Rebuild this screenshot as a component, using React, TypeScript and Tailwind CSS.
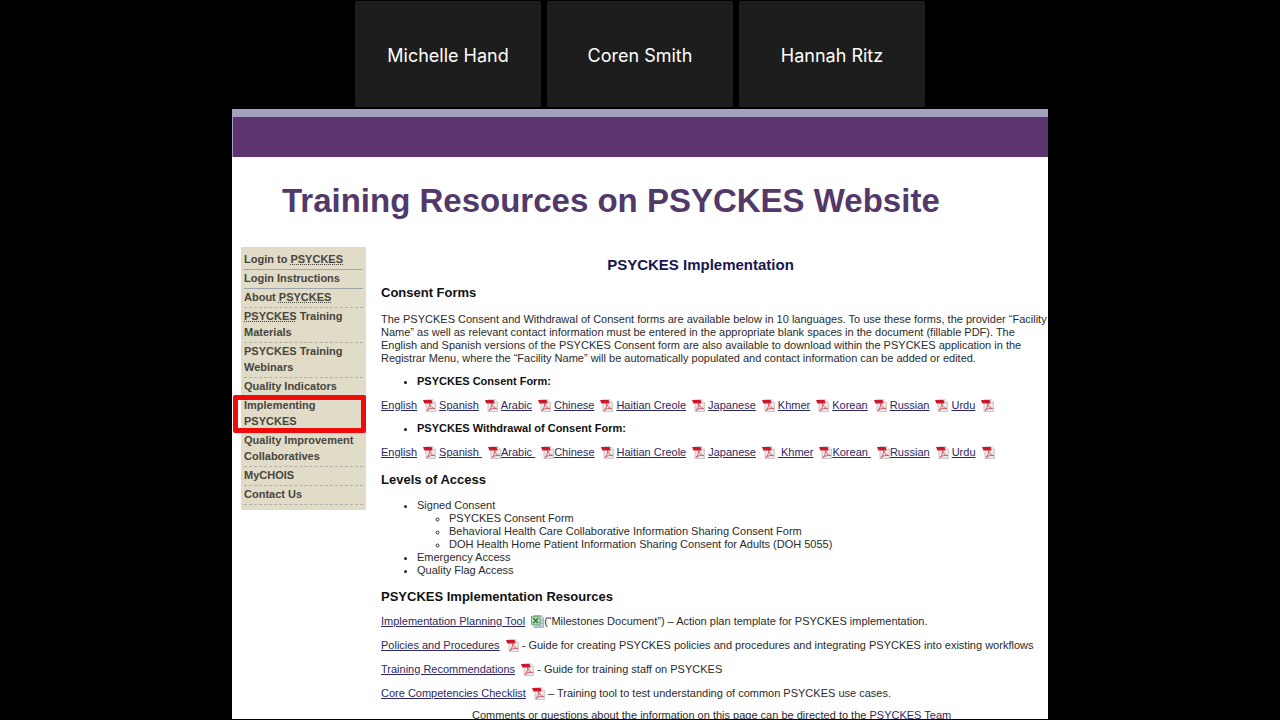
import type { ReactNode } from "react";

const participants = ["Michelle Hand", "Coren Smith", "Hannah Ritz"];

// non-breaking spaces keep the underline running past the word
const consentForms = ["English", "Spanish", "Arabic", "Chinese", "Haitian Creole", "Japanese", "Khmer", "Korean", "Russian", "Urdu"];
const withdrawalForms = [
  "English",
  "Spanish\u00a0",
  "Arabic\u00a0",
  "Chinese",
  "Haitian Creole",
  "Japanese",
  "\u00a0Khmer",
  "Korean\u00a0",
  "Russian",
  "Urdu",
];

// languages that sit directly against the icon before them
const tightForms = ["Arabic\u00a0", "Chinese", "Korean\u00a0", "Russian"];

function PdfIcon() {
  return (
    <svg viewBox="0 0 13 13" className="h-[13px] w-[13px] shrink-0" aria-hidden="true">
      <path d="M3 .8h7l2.4 2.4v9.3H3z" fill="#eeeaea" stroke="#b9b3b3" strokeWidth=".7" />
      <path d="M9.8.8v2.6h2.6" fill="#fff" stroke="#b9b3b3" strokeWidth=".6" />
      <path d="M0 1h8.6l1 3.6H1.4z" fill="#c9182b" />
      <path
        d="M6.6 4.4c.7 2.8 2.3 4.7 5 5.2-2.6-.6-5.4 0-7.6 1.9 1.7-1.8 2.8-4.2 2.6-7.1z"
        fill="none"
        stroke="#d4485a"
        strokeWidth=".9"
        strokeLinejoin="round"
      />
    </svg>
  );
}

function ExcelIcon() {
  return (
    <svg viewBox="0 0 13 13" className="h-[13px] w-[13px] shrink-0" aria-hidden="true">
      <path d="M3 .6h7.4l2.1 2.1v9.7H3z" fill="#cfdbea" stroke="#8794ad" strokeWidth=".7" />
      <path d="M9 4.5h2.6M9 6.5h2.6M9 8.5h2.6M5 11h6.6" stroke="#8ea4c4" strokeWidth=".8" />
      <path d="M.5 1.4h8.6v8.4H.5z" fill="#b9dcb3" stroke="#5f9a62" strokeWidth=".8" />
      <path d="M2.2 3l5 5.2M7.2 3l-5 5.2" stroke="#2f8240" strokeWidth="1.5" />
    </svg>
  );
}

function DocLink({ children }: { children: ReactNode }) {
  return (
    <a href="#" className="text-[#2d2863] underline">
      {children}
    </a>
  );
}

function Abbr() {
  return <abbr className="underline decoration-dotted underline-offset-1">PSYCKES</abbr>;
}

const menu: { label: ReactNode; solid?: boolean; active?: boolean }[] = [
  { label: <>Login to <Abbr /></>, solid: true },
  { label: "Login Instructions", solid: true },
  { label: <>About <Abbr /></> },
  { label: <><Abbr /> Training Materials</> },
  { label: "PSYCKES Training Webinars" },
  { label: "Quality Indicators" },
  { label: "Implementing PSYCKES", active: true },
  { label: "Quality Improvement Collaboratives" },
  { label: "MyCHOIS" },
  { label: "Contact Us" },
];

function Sidebar() {
  return (
    <nav className="w-[125px] shrink-0 self-start bg-[#e1dcc8] px-[3px] pt-1 pb-[5px]">
      <ul>
        {menu.map((item, i) => (
          <li
            key={i}
            className={`relative border-b pb-0.5 text-[11px] leading-4 font-bold text-[#48453c] ${
              item.solid ? "border-solid border-[#9aa5ac]" : "border-dashed border-[#b3b0a6]"
            }`}
          >
            <a href="#" className={item.active ? "block w-20" : "block"}>
              {item.label}
            </a>
            {item.active && <span className="absolute -inset-y-0.5 -left-[11px] -right-[3px] rounded-xs border-5 border-[#f00a0a]" />}
          </li>
        ))}
      </ul>
    </nav>
  );
}

function FormRow({ forms }: { forms: string[] }) {
  return (
    <div className="flex h-6 items-center">
      {forms.map((form) => (
        <span key={form} className={`flex items-center gap-1.5 ${tightForms.includes(form) && forms === withdrawalForms ? "" : "pl-[3px] first:pl-0"}`}>
          <DocLink>{form}</DocLink>
          <PdfIcon />
        </span>
      ))}
    </div>
  );
}

const resources = [
  { name: "Implementation Planning Tool", icon: <ExcelIcon />, text: "(“Milestones Document”) – Action plan template for PSYCKES implementation." },
  { name: "Policies and Procedures", icon: <PdfIcon />, text: "\u00a0- Guide for creating PSYCKES policies and procedures and integrating PSYCKES into existing workflows" },
  { name: "Training Recommendations", icon: <PdfIcon />, text: "\u00a0- Guide for training staff on PSYCKES" },
  { name: "Core Competencies Checklist", icon: <PdfIcon />, text: "\u00a0– Training tool to test understanding of common PSYCKES use cases." },
];

function Heading({ children }: { children: ReactNode }) {
  return <h3 className="text-[13px] leading-4 font-bold text-[#111]">{children}</h3>;
}

function Content() {
  return (
    <div className="min-w-0 flex-1 pt-2.5 text-[11px] leading-[13px] whitespace-nowrap text-[#2b2b2b]">
      <h2 className="pr-7 text-center text-[15px] leading-4 font-bold text-[#171650]">PSYCKES Implementation</h2>

      <div className="mt-3">
        <Heading>Consent Forms</Heading>
      </div>
      <p className="mt-3">
        The PSYCKES Consent and Withdrawal of Consent forms are available below in 10 languages. To use these forms, the provider “Facility
        <br />
        Name” as well as relevant contact information must be entered in the appropriate blank spaces in the document (fillable PDF). The
        <br />
        English and Spanish versions of the PSYCKES Consent form are also available to download within the PSYCKES application in the
        <br />
        Registrar Menu, where the “Facility Name” will be automatically populated and contact information can be added or edited.
      </p>

      <ul className="mt-1 list-disc pl-9 leading-6 font-bold text-[#111]">
        <li>PSYCKES Consent Form:</li>
      </ul>
      <FormRow forms={consentForms} />
      <ul className="list-disc pl-9 leading-[23px] font-bold text-[#111]">
        <li>PSYCKES Withdrawal of Consent Form:</li>
      </ul>
      <FormRow forms={withdrawalForms} />

      <div className="mt-2">
        <Heading>Levels of Access</Heading>
      </div>
      <ul className="mt-[11px] list-disc pl-9">
        <li>
          Signed Consent
          <ul className="list-[circle] pl-8">
            <li>PSYCKES Consent Form</li>
            <li>Behavioral Health Care Collaborative Information Sharing Consent Form</li>
            <li>DOH Health Home Patient Information Sharing Consent for Adults (DOH 5055)</li>
          </ul>
        </li>
        <li>Emergency Access</li>
        <li>Quality Flag Access</li>
      </ul>

      <div className="mt-3">
        <Heading>PSYCKES Implementation Resources</Heading>
      </div>
      <div className="mt-1">
        {resources.map((r) => (
          <p key={r.name} className="flex h-6 items-center">
            <DocLink>{r.name}</DocLink>
            <span className="pl-1.5">{r.icon}</span>
            <span>{r.text}</span>
          </p>
        ))}
      </div>
      <p className="mt-1 pl-[91px]">
        Comments or questions about the information on this page can be directed to the{" "}
        <a href="#" className="text-[#2d2863]">
          PSYCKES Team
        </a>
      </p>
    </div>
  );
}

export default function App() {
  return (
    <main className="flex h-screen flex-col items-center overflow-hidden bg-black pb-px font-['Liberation_Sans',Arial,sans-serif]">
      <div className="flex shrink-0 gap-1.5 pt-px">
        {participants.map((name) => (
          <div key={name} className="flex h-[106px] w-[186px] items-center justify-center bg-[#1d1d1d] pt-0.5 font-['Inter',sans-serif] text-[18px] text-white">
            {name}
          </div>
        ))}
      </div>

      <section className="mt-0.5 min-h-0 w-full max-w-[816px] flex-1 overflow-hidden bg-white">
        <div className="h-2 bg-[#a3a3bf]" />
        <div className="h-10 border-l border-[#a3a3bf] bg-[#5c3470]" />
        <h1 className="pt-6 pl-[50px] text-[33px] leading-10 font-bold text-[#52396a]">Training Resources on PSYCKES Website</h1>
        <div className="flex gap-[15px] pt-[26px] pl-[9px]">
          <Sidebar />
          <Content />
        </div>
      </section>
    </main>
  );
}
